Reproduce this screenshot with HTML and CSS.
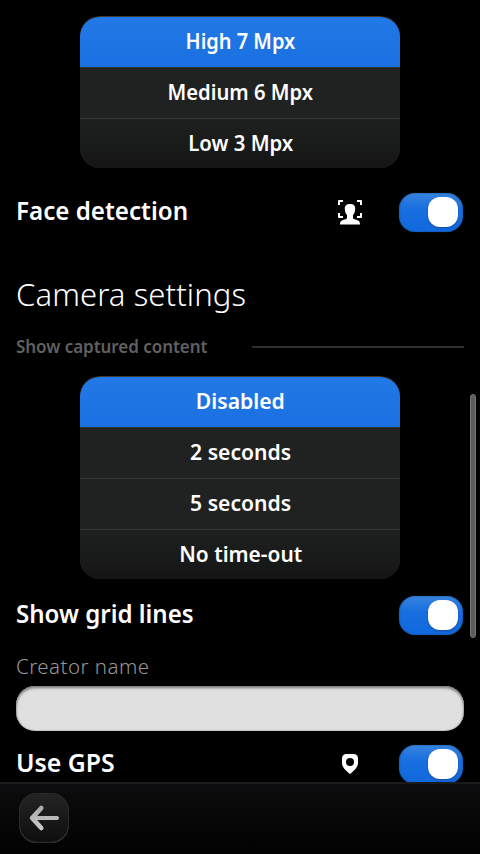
FILE: index.html
```html
<!DOCTYPE html>
<html lang="en">
<head>
<meta charset="utf-8">
<title>Camera settings</title>
<link rel="stylesheet" href="styles.css">
</head>
<body>
<main class="content">
  <div class="options">
    <div class="option selected"><span class="text t-high">High 7 Mpx</span></div>
    <div class="option"><span class="text t-medium">Medium 6 Mpx</span></div>
    <div class="option"><span class="text t-low">Low 3 Mpx</span></div>
  </div>
  <div class="row row-face">
    <span class="label t-face">Face detection</span>
    <svg class="icon" viewBox="0 0 26 26" width="26" height="26">
      <path d="M2 6V2H6M20 2h4V6M24 14v4H20M6 18H2V14" fill="none" stroke="#fff" stroke-width="2" stroke-linejoin="round"/>
      <path d="M13 5c-3.700 0-5.300 1.800-5.200 4.500.1 3.500.8 5 2.200 6.600v2.300c0 1.300-.8 1.700-3 2.300-3 .8-4 1.700-4 4.800h20c0-3.100-1-4-4-4.800-2.200-.6-3-1-3-2.300v-2.300c1.400-1.600 2.100-3.100 2.200-6.600.1-2.700-1.500-4.500-5.200-4.500z" fill="#fff"/>
    </svg>
    <span class="switch"><span class="knob"></span></span>
  </div>
  <h1 class="title">Camera settings</h1>
  <div class="section"><span class="section-name">Show captured content</span><span class="rule"></span></div>
  <div class="options">
    <div class="option selected"><span class="text t-disabled">Disabled</span></div>
    <div class="option"><span class="text t-seconds">2 seconds</span></div>
    <div class="option"><span class="text t-seconds">5 seconds</span></div>
    <div class="option"><span class="text t-none">No time-out</span></div>
  </div>
  <div class="row row-grid">
    <span class="label t-grid">Show grid lines</span>
    <span class="switch"><span class="knob"></span></span>
  </div>
  <div class="field-name">Creator name</div>
  <div class="field"></div>
  <div class="row row-gps">
    <span class="label t-gps">Use GPS</span>
    <svg class="icon" viewBox="0 0 26 26" width="26" height="26">
      <path fill-rule="evenodd" d="M9.500 3h7Q21 3 21 7.500v4.500c0 4-3.500 7.500-8 11-4.500-3.500-8-7-8-11V7.500Q5 3 9.500 3zM13 7a4 4 0 1 0 0 8 4 4 0 0 0 0-8z" fill="#fff"/>
    </svg>
    <span class="switch"><span class="knob"></span></span>
  </div>
  <div class="scrollbar"></div>
</main>
<footer class="toolbar">
  <div class="back">
    <svg viewBox="0 0 50 50" width="50" height="50">
      <defs><linearGradient id="arrow" x1="0" y1="0" x2="0" y2="1"><stop offset="0" stop-color="#a8a8aa"/><stop offset="1" stop-color="#ccccce"/></linearGradient></defs>
      <path d="M20.600 13.500a2.200 2.200 0 0 1 3.400 3L18.200 23H38a2 2 0 0 1 0 4H18.200l5.800 6.500a2.200 2.200 0 0 1-3.400 3L11.200 26.200a1.800 1.800 0 0 1 0-2.400z" fill="url(#arrow)"/>
    </svg>
  </div>
</footer>
</body>
</html>
```
FILE: styles.css
```css
* { box-sizing: border-box; }

body {
  margin: 0;
  width: 480px;
  height: 854px;
  overflow: hidden;
  background: #000;
  color: #fff;
  font-family: "Noto Sans", "Open Sans", sans-serif;
  display: flex;
  flex-direction: column;
}

.content {
  position: relative;
  height: 782px;
  padding: 17px 16px 0;
  overflow: hidden;
}

.options {
  width: 320px;
  margin: 0 auto;
  border-radius: 20px;
  overflow: hidden;
  background: #202121;
  box-shadow: 0 -1px 0 #3f3a36, 0 0 1px #151515;
}

.option {
  height: 51px;
  border-top: 1px solid #363636;
  padding-left: 1px;
  line-height: 47px;
  text-align: center;
  font-size: 22px;
  font-weight: 600;
  white-space: nowrap;
}

.option.selected {
  height: 50px;
  border-top: 0;
  background: linear-gradient(#2278e4, #1a70e1);
}

.option:last-child {
  height: 50px;
  background: linear-gradient(#1e2020, #151515);
}

/* Condensed lettering, tuned per string */
.text { display: inline-block; }
.t-high { transform: scaleX(0.908); }
.t-medium { transform: scaleX(0.918); }
.t-low { transform: scaleX(0.925); }
.t-disabled { transform: scaleX(0.96); }
.t-seconds { transform: scaleX(0.96); }
.t-none { transform: scaleX(0.95); }
.t-face { transform: scaleX(0.93); }
.t-grid { transform: scaleX(0.925); }
.t-gps { transform: scaleX(0.955); }

.row {
  height: 42px;
  padding-right: 1px;
  display: flex;
  align-items: center;
  white-space: nowrap;
}

.row-face { margin-top: 23px; }
.row-grid { margin-top: 15px; }
.row-gps { margin-top: 12px; }

.label {
  flex: 1;
  font-size: 26px;
  line-height: 38px;
  font-weight: 600;
  padding-bottom: 4px;
  transform-origin: left;
}

.icon { margin-right: 36px; }

.switch {
  width: 64px;
  height: 39px;
  padding: 4px 5px;
  border-radius: 16px;
  display: flex;
  justify-content: flex-end;
  background: linear-gradient(#3984df, #176fe0 40%, #1068de);
  box-shadow: inset 0 0 2px #164983, 0 0 1px #444;
}

.knob {
  width: 30px;
  height: 30px;
  border-radius: 12px;
  background: #fff;
  box-shadow: 0 1px 2px #174b98;
}

.title {
  margin: 38px 0 0;
  height: 44px;
  font-size: 31px;
  line-height: 46px;
  font-weight: 300;
  letter-spacing: 0.1px;
  white-space: nowrap;
}

.section {
  height: 24px;
  margin: 19px 0;
  display: flex;
  align-items: center;
  color: #606060;
  white-space: nowrap;
}

.section-name {
  width: 236px;
  padding-top: 1px;
  font-size: 17px;
  line-height: 24px;
  font-weight: 600;
  letter-spacing: -0.04px;
}

.rule {
  flex: 1;
  height: 2px;
  margin-top: 2px;
  background: #303030;
}

.field-name {
  height: 28px;
  margin-top: 17px;
  font-size: 20.5px;
  line-height: 27px;
  font-weight: 300;
  letter-spacing: 0.45px;
  color: #979797;
  white-space: nowrap;
}

.field {
  height: 45px;
  margin-top: 5px;
  border-radius: 19px;
  background: #e1e0e1;
  box-shadow: inset 0 2px 3px #777, inset 0 0 2px #888;
}

.scrollbar {
  position: absolute;
  top: 394px;
  right: 4px;
  width: 6px;
  height: 244px;
  border: 1px solid #777;
  border-radius: 3px;
  background: #5c5c5c;
}

.toolbar {
  height: 72px;
  padding: 9px 19px;
  border-top: 2px solid #1b1b1d;
  background: linear-gradient(#0d0c0e, #020202);
}

.back {
  width: 50px;
  height: 50px;
  border-radius: 18px;
  background: linear-gradient(#242424, #0e0e0e);
  box-shadow: inset 0 0 0 1px #2a2a2a, inset 0 -1px 1px #555;
}

.back svg { display: block; }
```
